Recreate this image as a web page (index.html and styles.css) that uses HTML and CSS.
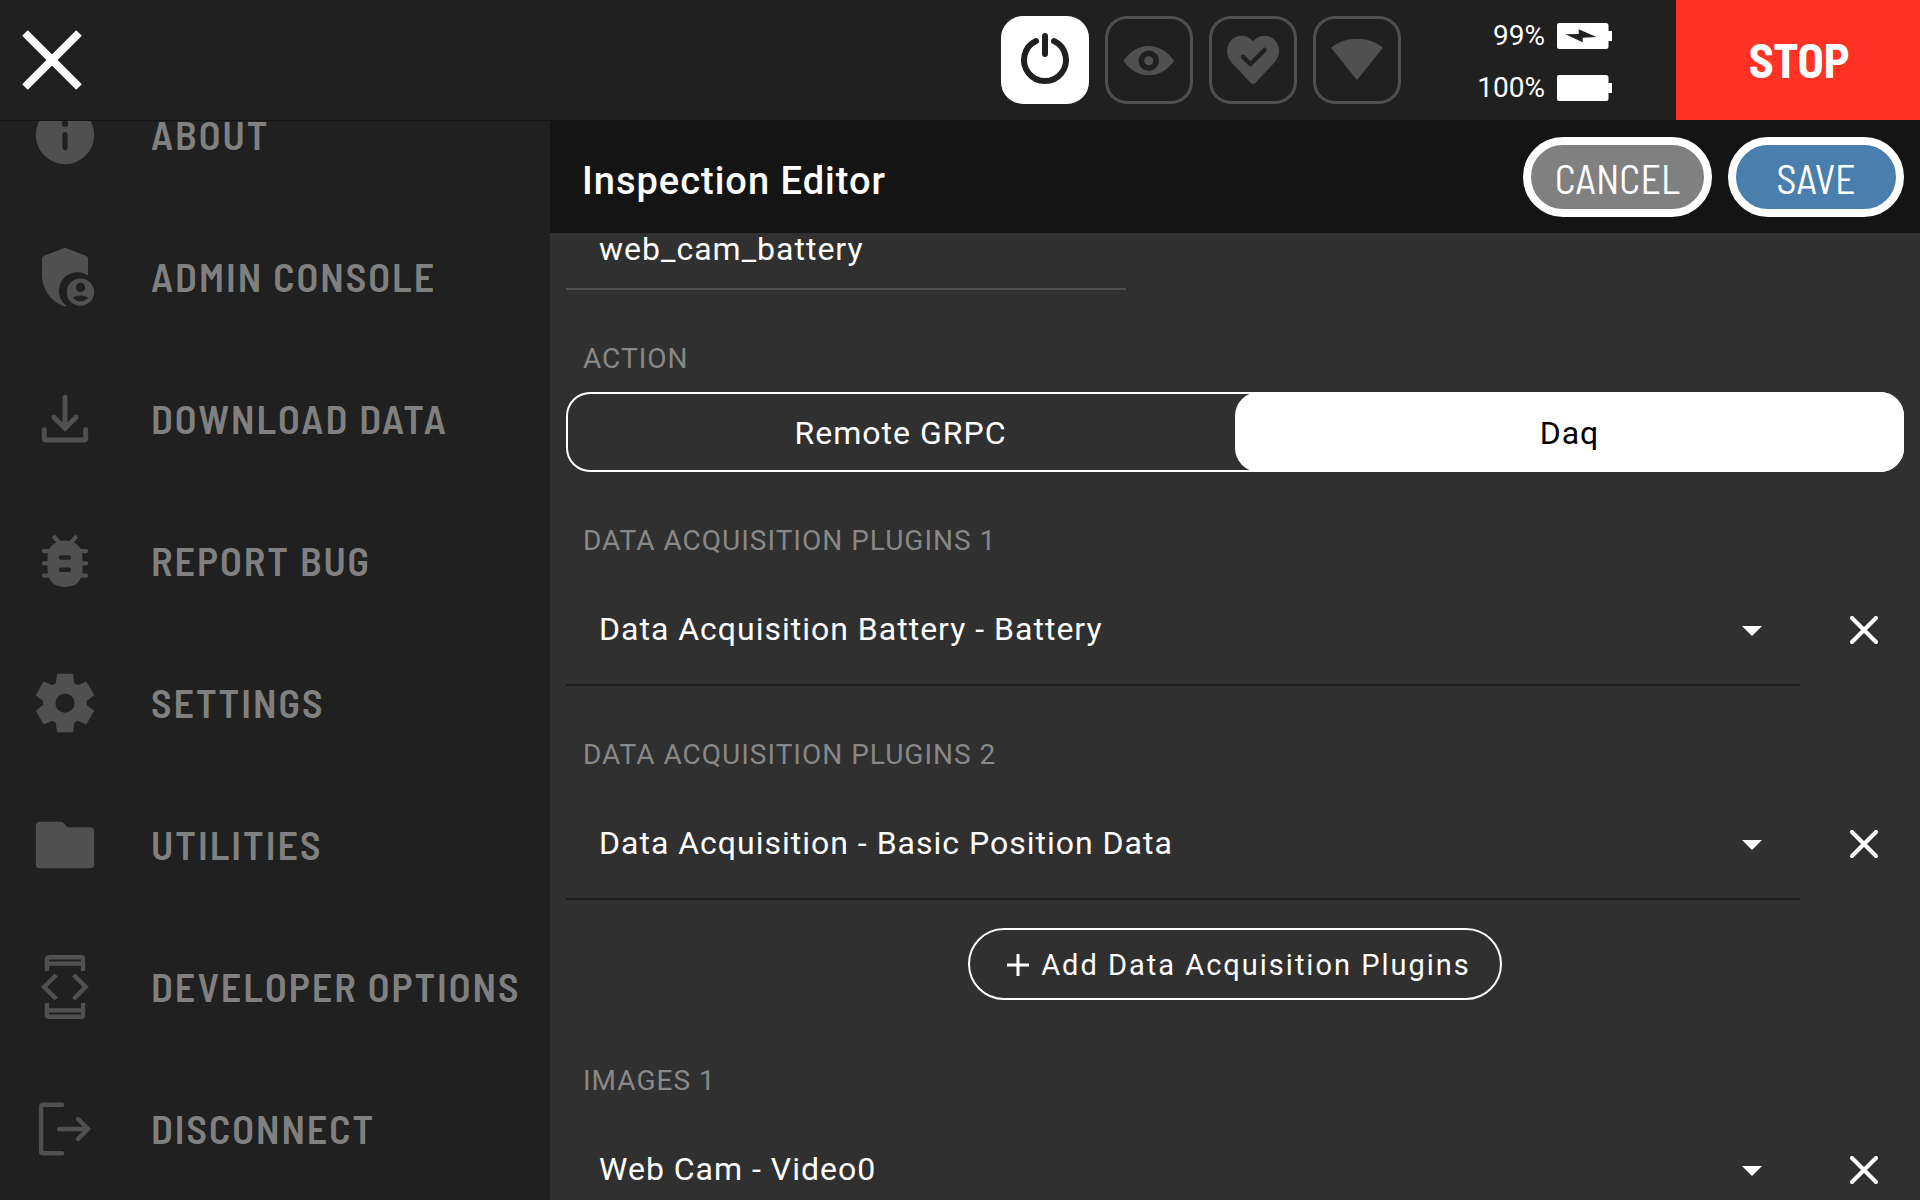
FILE: index.html
```html
<!DOCTYPE html>
<html lang="en">
<head>
<meta charset="utf-8">
<meta name="viewport" content="width=device-width, initial-scale=1">
<title>Inspection Editor</title>
<link rel="stylesheet" href="styles.css">
</head>
<body>
<div class="app">
  <header class="topbar">
    <button class="close" type="button" aria-label="Close menu">
      <svg width="60" height="60" viewBox="0 0 60 60"><path d="M3 3L57 57M57 3L3 57" stroke="currentColor" stroke-width="8"/></svg>
    </button>
    <div class="status">
      <button class="tile tile-on" type="button" aria-label="Power">
        <svg viewBox="0 0 88 88"><path d="M35 25A21 21 0 1 0 53 25M44 20V38" fill="none" stroke="currentColor" stroke-width="6" stroke-linecap="round"/></svg>
      </button>
      <button class="tile" type="button" aria-label="Camera view">
        <svg viewBox="0 0 88 88"><path fill="currentColor" fill-rule="evenodd" d="M18.500 44.700C24 36.500 33 30 43.800 30S63.500 36.500 69 44.700C63.500 53 54.500 59.300 43.800 59.300S24 53 18.500 44.700ZM43.800 34.500a10.200 10.200 0 1 0 0 20.400a10.200 10.200 0 1 0 0-20.400ZM43.800 40.200a4.500 4.500 0 1 1 0 9a4.500 4.500 0 1 1 0-9Z"/></svg>
      </button>
      <button class="tile" type="button" aria-label="Health">
        <svg viewBox="0 0 88 88"><path fill="currentColor" d="M44 25.300C47 21.700 51 19.700 55.300 19.700C63.500 19.700 70 26.200 70 35C70 40 68 43.500 65 47L46.500 66.800Q44 69.300 41.500 66.800L23 47C20 43.500 18 40 18 35C18 26.200 24.500 19.700 32.700 19.700C37 19.700 41 21.700 44 25.300Z"/><path d="M34 40.700L41.300 48.200L55.500 33.900" fill="none" stroke="#202020" stroke-width="4.300" stroke-linecap="round" stroke-linejoin="round"/></svg>
      </button>
      <button class="tile" type="button" aria-label="Network">
        <svg viewBox="0 0 88 88"><path fill="currentColor" d="M18 31.700C25.500 25.600 34.500 22.700 44 22.700S62.500 25.600 70 31.700L44 64Z"/></svg>
      </button>
    </div>
    <div class="batteries">
      <div class="battery"><span>99%</span>
        <svg width="55" height="26" viewBox="0 0 55 26"><path fill="currentColor" fill-rule="evenodd" d="M2 0H49Q51.500 0 51.500 2.500V8H55V18H51.500V23.500Q51.500 26 49 26H2Q0 26 0 24V2Q0 0 2 0ZM8.300 11.300L25.700 19.300V14.800L39.500 14L21.700 6.200V11Z"/></svg>
      </div>
      <div class="battery"><span>100%</span>
        <svg width="55" height="26" viewBox="0 0 55 26"><path fill="currentColor" d="M2 0H49Q51.500 0 51.500 2.500V8H55V18H51.500V23.500Q51.500 26 49 26H2Q0 26 0 24V2Q0 0 2 0Z"/></svg>
      </div>
    </div>
    <button class="stop" type="button">STOP</button>
  </header>

  <div class="main">
    <nav class="sidebar">
      <ul class="menu">
        <li><a class="menu-item" href="#about">
          <svg viewBox="0 0 24 24"><path fill="currentColor" fill-rule="evenodd" d="M12 2a10 10 0 1 0 0 20a10 10 0 1 0 0-20ZM12 7a1 1 0 1 1 0 2.200a1 1 0 1 1 0-2.200ZM12 11q.9 0 .9 1V16.200q0 .9-.9.9t-.9-.9V12q0-1 .9-1Z"/></svg>
          ABOUT</a></li>
        <li><a class="menu-item" href="#admin">
          <svg viewBox="0 0 24 24"><path fill="currentColor" d="M12 2L19.200 4.700Q19.900 5 19.900 5.700V11.500A6.200 6.200 0 0 0 12.600 21.900Q12 22.100 11.400 21.900C7 20.300 4.100 16 4.100 11.200V5.700Q4.100 5 4.800 4.700Z"/><path fill="currentColor" fill-rule="evenodd" d="M17.300 12.500a4.700 4.700 0 1 0 0 9.400a4.700 4.700 0 1 0 0-9.400ZM17.300 14a1.600 1.600 0 1 1 0 3.200a1.600 1.600 0 1 1 0-3.200ZM14.600 19Q17.300 17.600 20 19Q17.300 21.700 14.600 19Z"/></svg>
          ADMIN CONSOLE</a></li>
        <li><a class="menu-item" href="#download">
          <svg viewBox="0 0 24 24" fill="none" stroke="currentColor" stroke-width="1.700" stroke-linecap="round"><path d="M12 4.500V15M8.200 11.400L12 15.200L15.800 11.400M4.900 15.700V18.500Q4.900 19.200 5.600 19.200H18.400Q19.100 19.200 19.100 18.500V15.700"/></svg>
          DOWNLOAD DATA</a></li>
        <li><a class="menu-item" href="#bug">
          <svg viewBox="0 0 24 24"><path fill="currentColor" fill-rule="evenodd" d="M12 5Q18 5.400 18 11V15Q17.800 20.800 12 20.900Q6.200 20.800 6 15V11Q6 5.400 12 5ZM10.700 10a.8.800 0 0 0 0 1.600H13.300a.8.800 0 0 0 0-1.600ZM10.700 14.200a.8.800 0 0 0 0 1.600H13.300a.8.800 0 0 0 0-1.600Z"/><path d="M8.400 3.900L10.200 5.900M15.600 3.900L13.800 5.900M4.800 8.600H7M17 8.600H19.200M4.800 12.800H7M17 12.800H19.200M4.800 17H7M17 17H19.200" stroke="currentColor" stroke-width="1.500" stroke-linecap="round"/></svg>
          REPORT BUG</a></li>
        <li><a class="menu-item" href="#settings">
          <svg viewBox="0 0 24 24"><path fill="currentColor" d="m9.250 22-.4-3.200q-.325-.125-.612-.3-.288-.175-.563-.375L4.700 19.375l-2.750-4.750 2.575-1.950Q4.500 12.500 4.500 12.337v-.675q0-.162.025-.337L1.950 9.375l2.750-4.750 2.975 1.250q.275-.2.575-.375.3-.175.6-.3l.4-3.200h5.500l.4 3.200q.325.125.613.3.287.175.562.375l2.975-1.250 2.750 4.750-2.575 1.950q.025.175.025.338v.674q0 .163-.05.338l2.575 1.950-2.750 4.750-2.950-1.250q-.275.2-.575.375-.3.175-.6.3l-.4 3.200Zm2.750-6.700q1.400 0 2.350-.95Q15.300 13.400 15.300 12q0-1.400-.95-2.350Q13.400 8.700 12 8.700q-1.400 0-2.350.95Q8.700 10.600 8.700 12q0 1.400.95 2.350Q10.600 15.300 12 15.300Z"/></svg>
          SETTINGS</a></li>
        <li><a class="menu-item" href="#utilities">
          <svg viewBox="0 0 24 24"><path fill="currentColor" d="M3.500 4H10.500Q11 4 11.300 4.300L12.900 5.900H20.500Q22 5.900 22 7.400V18.700Q22 20 20.700 20H3.300Q2 20 2 18.700V5.500Q2 4 3.500 4Z"/></svg>
          UTILITIES</a></li>
        <li><a class="menu-item" href="#developer">
          <svg viewBox="0 0 24 24" fill="none" stroke="currentColor" stroke-width="1.500"><path d="M5.800 6.500V2.500Q5.800 1.800 6.500 1.800H17.500Q18.200 1.800 18.200 2.500V6.500M5.800 4H18.200M5.800 17.500V21.500Q5.800 22.200 6.500 22.200H17.500Q18.200 22.200 18.200 21.500V17.500M5.800 20H18.200M9 7.900L4.900 12L9 16.100M15 7.900L19.100 12L15 16.100"/></svg>
          DEVELOPER OPTIONS</a></li>
        <li><a class="menu-item" href="#disconnect">
          <svg viewBox="0 0 24 24" fill="none" stroke="currentColor" stroke-width="1.500" stroke-linecap="round"><path d="M11 3.700H4.500Q3.800 3.700 3.800 4.400V19.600Q3.800 20.300 4.500 20.300H11M10 12H19.800M16.500 8.600L19.900 12L16.500 15.400"/></svg>
          DISCONNECT</a></li>
      </ul>
    </nav>

    <main class="editor">
      <div class="editor-head">
        <h1>Inspection Editor</h1>
        <button class="pill pill-cancel" type="button">CANCEL</button>
        <button class="pill pill-save" type="button">SAVE</button>
      </div>
      <form class="form">
        <input class="name" type="text" value="web_cam_battery" aria-label="Name">

        <fieldset class="group">
          <legend class="label">ACTION</legend>
          <div class="segments">
            <label class="segment"><input type="radio" name="action">Remote GRPC</label>
            <label class="segment"><input type="radio" name="action" checked>Daq</label>
          </div>
        </fieldset>

        <label class="label" for="plugin1">DATA ACQUISITION PLUGINS 1</label>
        <div class="row">
          <div class="select">
            <select id="plugin1"><option>Data Acquisition Battery - Battery</option></select>
            <svg width="20" height="10" viewBox="0 0 20 10"><path fill="currentColor" d="M0 0H20L10 10Z"/></svg>
          </div>
          <button class="remove" type="button" aria-label="Remove"><svg width="28" height="28" viewBox="0 0 28 28"><path d="M2 2L26 26M26 2L2 26" stroke="currentColor" stroke-width="4" stroke-linecap="round"/></svg></button>
        </div>

        <label class="label" for="plugin2">DATA ACQUISITION PLUGINS 2</label>
        <div class="row">
          <div class="select">
            <select id="plugin2"><option>Data Acquisition - Basic Position Data</option></select>
            <svg width="20" height="10" viewBox="0 0 20 10"><path fill="currentColor" d="M0 0H20L10 10Z"/></svg>
          </div>
          <button class="remove" type="button" aria-label="Remove"><svg width="28" height="28" viewBox="0 0 28 28"><path d="M2 2L26 26M26 2L2 26" stroke="currentColor" stroke-width="4" stroke-linecap="round"/></svg></button>
        </div>

        <button class="add" type="button">
          <svg width="22" height="22" viewBox="0 0 22 22"><path d="M11 0V22M0 11H22" stroke="currentColor" stroke-width="3"/></svg>
          Add Data Acquisition Plugins
        </button>

        <label class="label" for="image1">IMAGES 1</label>
        <div class="row">
          <div class="select">
            <select id="image1"><option>Web Cam - Video0</option></select>
            <svg width="20" height="10" viewBox="0 0 20 10"><path fill="currentColor" d="M0 0H20L10 10Z"/></svg>
          </div>
          <button class="remove" type="button" aria-label="Remove"><svg width="28" height="28" viewBox="0 0 28 28"><path d="M2 2L26 26M26 2L2 26" stroke="currentColor" stroke-width="4" stroke-linecap="round"/></svg></button>
        </div>
      </form>
    </main>
  </div>
</div>
</body>
</html>
```
FILE: styles.css
```css
* { box-sizing: border-box; }

body {
  margin: 0;
  background: #202020;
  color: #fff;
  font-family: Roboto, "Liberation Sans", sans-serif;
}

button, input, select {
  margin: 0;
  padding: 0;
  border: 0;
  background: none;
  color: inherit;
  font: inherit;
  letter-spacing: inherit;
}

.app {
  display: flex;
  flex-direction: column;
  height: 100vh;
  overflow: hidden;
}

/* Top bar */
.topbar {
  display: flex;
  flex: none;
  align-items: center;
  height: 120px;
}

.close {
  display: flex;
  margin-left: 22px;
}

.status {
  display: flex;
  gap: 16px;
  margin-left: auto;
}

.tile {
  width: 88px;
  height: 88px;
  border-radius: 22px;
  box-shadow: inset 0 0 0 3px #505050;
  color: #505050;
}

.tile svg { display: block; }

.tile-on {
  background: #fff;
  box-shadow: none;
  color: #202020;
}

.batteries {
  display: flex;
  flex-direction: column;
  align-items: flex-end;
  gap: 26px;
  width: 211px;
  margin-right: 64px;
  padding-top: 4px;
  font-size: 28px;
  line-height: 26px;
}

.battery {
  display: flex;
  gap: 12px;
}

.stop {
  align-self: stretch;
  width: 244px;
  padding: 0 0 2px 2px;
  background: #ff3224;
  font-family: "Barlow Semi Condensed", "Roboto Condensed", "Liberation Sans Narrow", Roboto, sans-serif;
  font-size: 48px;
  font-weight: 700;
}

/* Sidebar */
.main {
  display: flex;
  flex: 1;
  min-height: 0;
}

.sidebar {
  flex: none;
  width: 550px;
  overflow: hidden;
  border-top: 1px solid #141414;
}

.menu {
  margin: -58px 0 0;
  padding: 0;
  list-style: none;
}

.menu-item {
  display: flex;
  align-items: center;
  gap: 51px;
  height: 142px;
  padding-left: 30px;
  color: #808080;
  font-family: "Barlow Semi Condensed", "Roboto Condensed", "Liberation Sans Narrow", Roboto, sans-serif;
  font-size: 40px;
  font-weight: 600;
  letter-spacing: 2px;
  text-decoration: none;
  white-space: nowrap;
}

.menu-item svg {
  flex: none;
  width: 70px;
  height: 70px;
  margin-top: 2px;
  color: #505050;
}

/* Editor */
.editor {
  flex: 1;
  min-width: 0;
  overflow: hidden;
  background: #303030;
}

.editor-head {
  display: flex;
  align-items: center;
  gap: 16px;
  height: 113px;
  padding: 0 16px 0 32px;
  background: #141414;
}

.editor-head h1 {
  flex: 1;
  margin: 0;
  padding-top: 8px;
  font-size: 38px;
  font-weight: 500;
  letter-spacing: 1px;
}

.pill {
  height: 80px;
  padding-top: 2px;
  border: 8px solid #fff;
  border-radius: 40px;
  font-family: "Barlow Semi Condensed", "Roboto Condensed", "Liberation Sans Narrow", Roboto, sans-serif;
  font-size: 40px;
  font-weight: 400;
}

.pill-cancel {
  width: 189px;
  background: #808080;
}

.pill-save {
  width: 176px;
  background: #4a7eac;
}

.form {
  display: flex;
  flex-direction: column;
  padding: 0 16px;
  font-size: 32px;
  letter-spacing: 1px;
}

.name {
  width: 560px;
  height: 57px;
  padding: 0 33px 24px;
  border-bottom: 2px solid #505050;
}

.group {
  margin: 52px 0 0;
  padding: 0;
  border: 0;
}

.label {
  display: block;
  margin: 52px 0 16px;
  padding: 0 17px;
  color: #888;
  font-size: 28px;
  line-height: 34px;
}

.segments {
  display: flex;
  height: 80px;
  border-radius: 24px;
  box-shadow: inset 0 0 0 2px #fff;
}

.segment {
  display: flex;
  flex: 1;
  align-items: center;
  justify-content: center;
  padding-top: 2px;
  border-radius: 24px;
}

.segment input {
  appearance: none;
}

.segment:has(input:checked) {
  background: #fff;
  color: #000;
}

.row {
  display: flex;
  gap: 24px;
  height: 112px;
}

.select {
  display: grid;
  flex: 1;
  align-items: center;
  border-bottom: 2px solid #1c1c1c;
}

.select select {
  grid-area: 1 / 1;
  height: 100%;
  padding: 0 33px;
  appearance: none;
}

.select svg {
  grid-area: 1 / 1;
  justify-self: end;
  margin: 4px 38px 0 0;
  pointer-events: none;
}

.remove {
  display: flex;
  align-items: center;
  justify-content: center;
  width: 80px;
}

.add {
  display: flex;
  align-items: center;
  align-self: center;
  gap: 12px;
  height: 72px;
  margin: 28px 0 12px;
  padding: 2px 29px 0 37px;
  border: 2px solid #fff;
  border-radius: 36px;
  font-size: 29px;
  letter-spacing: 2px;
}
```
